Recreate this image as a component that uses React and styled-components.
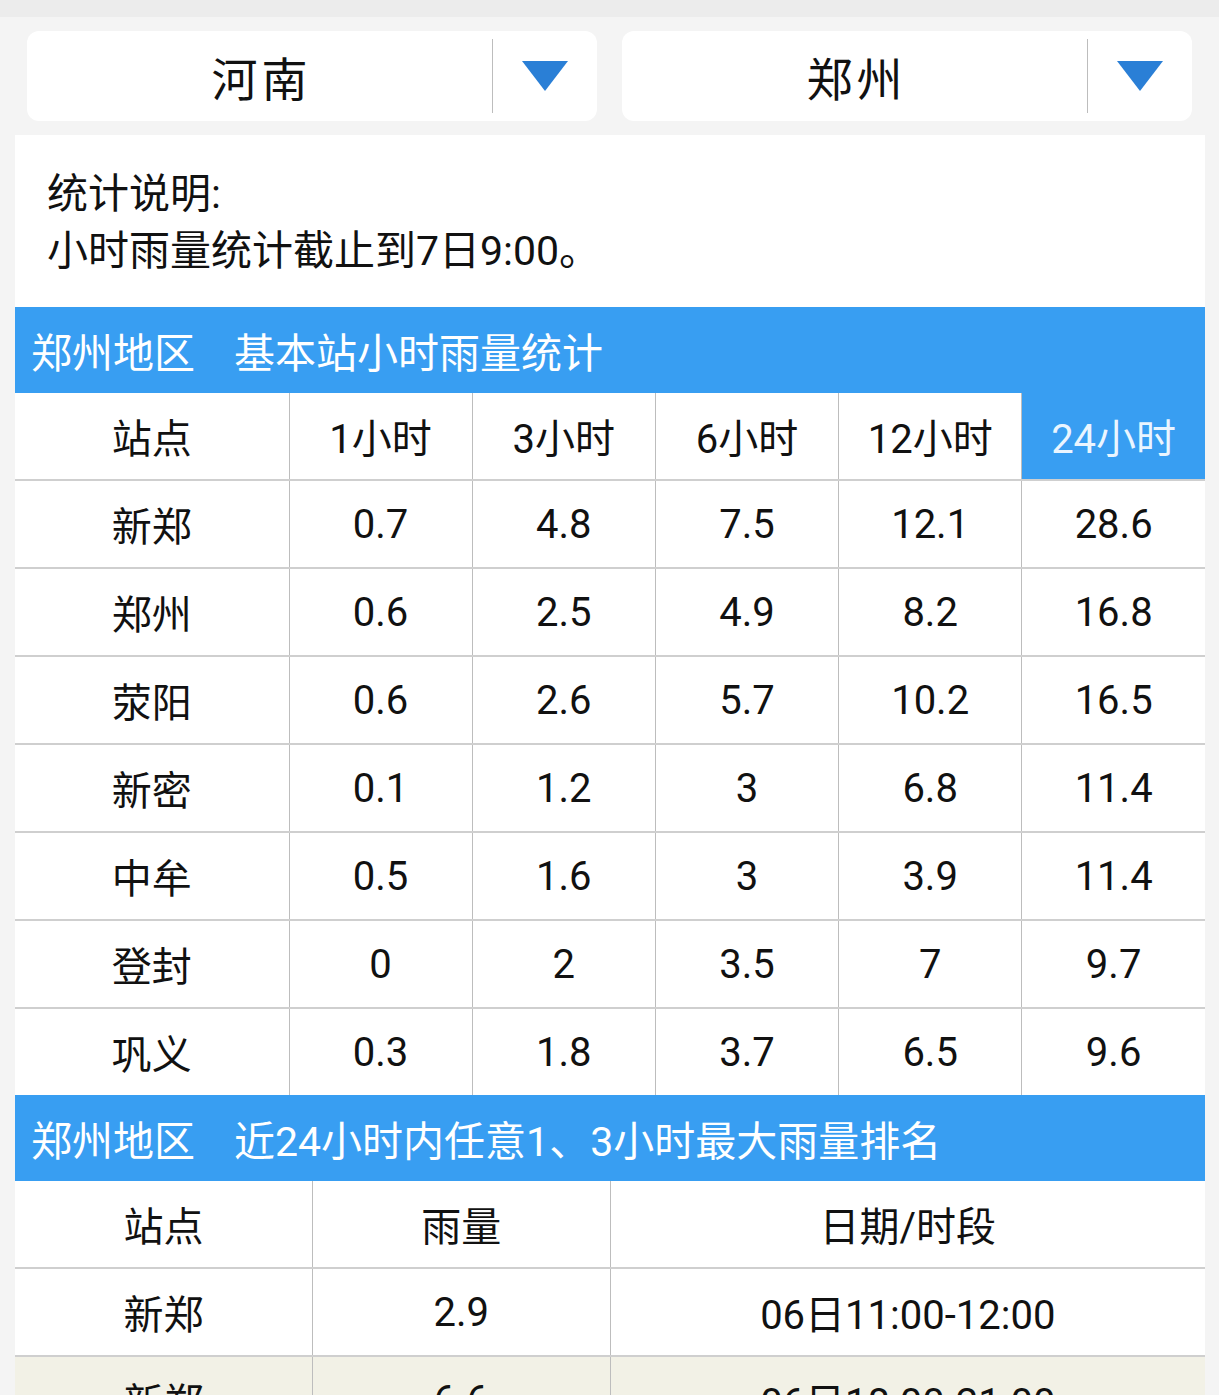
import React from 'react';
import styled, { createGlobalStyle } from 'styled-components';

const GlobalStyle = createGlobalStyle`
  html, body {
    margin: 0;
    padding: 0;
    background: #f4f4f4;
    font-family: Roboto, "Noto Sans CJK SC", "Noto Sans", sans-serif;
    color: #111;
  }
`;

const Page = styled.div`
  width: 1219px;
  min-height: 1395px;
  background: #f4f4f4;
`;

const TopStrip = styled.div`
  height: 17px;
  background: #ececec;
`;

const SelectRow = styled.div`
  display: flex;
  gap: 25px;
  padding: 14px 27px;
`;

const Select = styled.div`
  flex: 1;
  height: 90px;
  background: #fff;
  border-radius: 12px;
  display: flex;
  align-items: center;
`;

const SelectLabel = styled.div`
  flex: 1;
  text-align: center;
  font-size: 46px;
  letter-spacing: 4px;
  padding-left: 4px;
`;

const SelectDivider = styled.div`
  width: 1px;
  height: 74px;
  background: #bdbdbd;
`;

const ArrowBox = styled.div`
  width: 104px;
  display: flex;
  justify-content: center;
  align-items: center;
`;

const Panel = styled.div`
  margin: 0 14px 0 15px;
  background: #fff;
`;

const Notes = styled.div`
  padding: 31px 32px 27px;
  font-size: 41px;
  line-height: 57px;
  height: 114px;
`;

const SectionBar = styled.div`
  height: 86px;
  background: #389ef2;
  color: #fff;
  display: flex;
  align-items: center;
  padding-left: 16px;
  font-size: 41px;
  gap: 39px;
`;

const Table = styled.table`
  width: 100%;
  border-collapse: collapse;
  table-layout: fixed;
`;

const Cell = styled.td`
  height: 86px;
  padding: 0;
  text-align: center;
  font-size: 40px;
  border-left: 1px solid #bdbdbd;
  border-top: 2px solid #cfcfcf;
  color: ${p => (p.$active ? '#eaf5ff' : '#111')};
  background: ${p => (p.$active ? '#389ef2' : 'transparent')};
  &:first-child {
    border-left: none;
  }
`;

const Row = styled.tr`
  background: ${p => (p.$tint ? '#f2f1e6' : '#fff')};
  &:first-child td {
    border-top: none;
  }
`;

const Arrow = () => (
  <svg width="46" height="30" viewBox="0 0 46 30">
    <polygon points="0,0 46,0 23,30" fill="#2a7fd6" />
  </svg>
);

const hourHeads = ['站点', '1小时', '3小时', '6小时', '12小时', '24小时'];
const hourRows = [
  ['新郑', '0.7', '4.8', '7.5', '12.1', '28.6'],
  ['郑州', '0.6', '2.5', '4.9', '8.2', '16.8'],
  ['荥阳', '0.6', '2.6', '5.7', '10.2', '16.5'],
  ['新密', '0.1', '1.2', '3', '6.8', '11.4'],
  ['中牟', '0.5', '1.6', '3', '3.9', '11.4'],
  ['登封', '0', '2', '3.5', '7', '9.7'],
  ['巩义', '0.3', '1.8', '3.7', '6.5', '9.6'],
];

const rankRows = [
  ['新郑', '2.9', '06日11:00-12:00'],
  ['新郑', '6.6', '06日18:00-21:00'],
];

const App = () => (
  <Page>
    <GlobalStyle />
    <TopStrip />
    <SelectRow>
      {['河南', '郑州'].map(name => (
        <Select key={name}>
          <SelectLabel>{name}</SelectLabel>
          <SelectDivider />
          <ArrowBox><Arrow /></ArrowBox>
        </Select>
      ))}
    </SelectRow>
    <Panel>
      <Notes>
        <div>统计说明:</div>
        <div>小时雨量统计截止到7日9:00。</div>
      </Notes>
      <SectionBar>
        <span>郑州地区</span>
        <span>基本站小时雨量统计</span>
      </SectionBar>
      <Table>
        <colgroup>
          <col style={{ width: 274 }} />
          <col /><col /><col /><col /><col />
        </colgroup>
        <tbody>
          <Row>
            {hourHeads.map((h, i) => <Cell key={h} $active={i === 5}>{h}</Cell>)}
          </Row>
          {hourRows.map(row => (
            <Row key={row[0]}>
              {row.map((c, i) => <Cell key={i}>{c}</Cell>)}
            </Row>
          ))}
        </tbody>
      </Table>
      <SectionBar>
        <span>郑州地区</span>
        <span>近24小时内任意1、3小时最大雨量排名</span>
      </SectionBar>
      <Table>
        <colgroup>
          <col style={{ width: '25%' }} />
          <col style={{ width: '25%' }} />
          <col style={{ width: '50%' }} />
        </colgroup>
        <tbody>
          <Row>
            <Cell>站点</Cell>
            <Cell>雨量</Cell>
            <Cell>日期/时段</Cell>
          </Row>
          {rankRows.map((row, r) => (
            <Row key={r} $tint={r % 2 === 1}>
              {row.map((c, i) => <Cell key={i}>{c}</Cell>)}
            </Row>
          ))}
        </tbody>
      </Table>
    </Panel>
  </Page>
);

export default App;
